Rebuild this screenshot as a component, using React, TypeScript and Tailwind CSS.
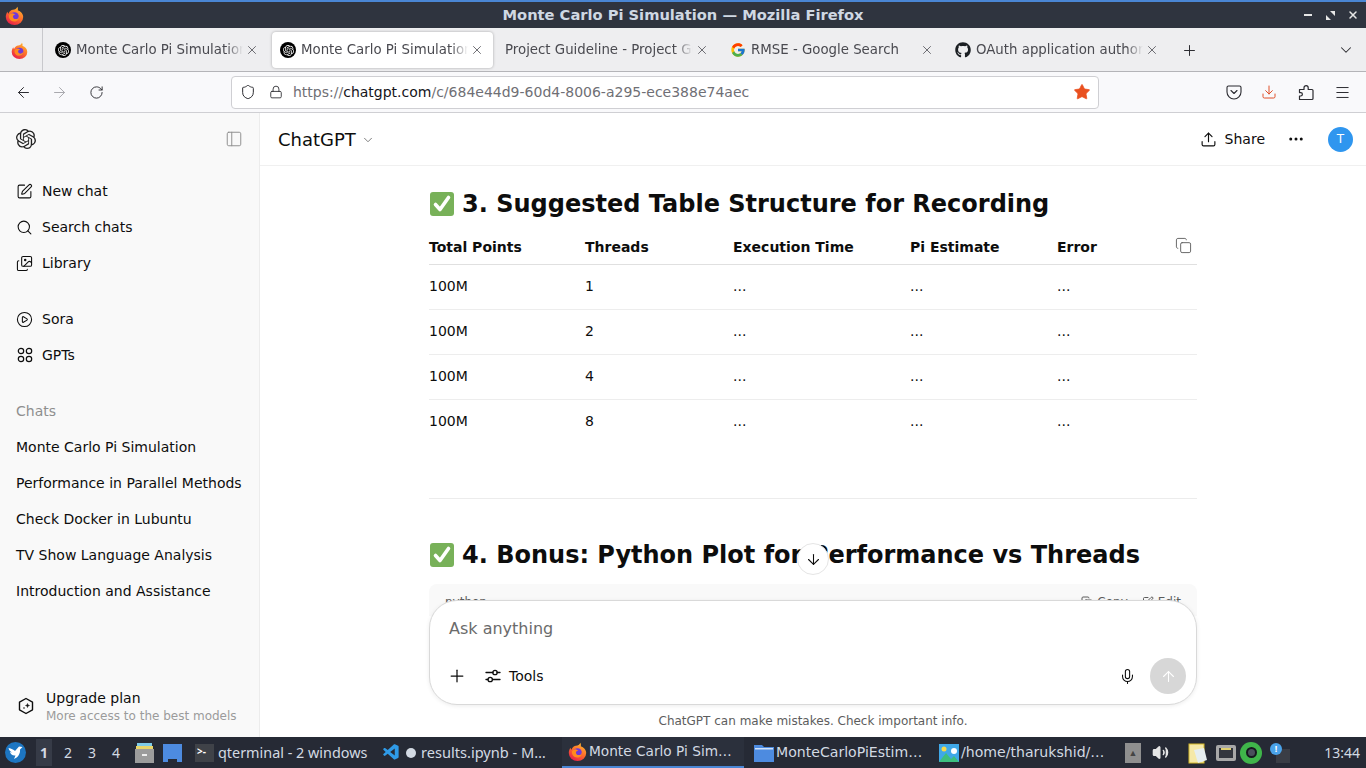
import { ArrowDown, ArrowLeft, ArrowRight, ArrowUp, ChevronDown, Copy, Ellipsis, Images, Lock, Menu, Mic, PanelLeft, Plus, RotateCw, Search, Shield, SquarePen, Star, Upload, Volume2, X, CirclePlay, Download } from 'lucide-react';
import { FaGithub } from 'react-icons/fa';
import { FcGoogle } from 'react-icons/fc';
import { SiOpenai } from 'react-icons/si';
import { VscVscode } from 'react-icons/vsc';

const FirefoxLogo = ({ size = 18 }: { size?: number }) => (
    <svg width={size} height={size} viewBox="0 0 24 24" className="shrink-0">
        <defs>
            <linearGradient id="ffOuter" x1="0.8" y1="0" x2="0.2" y2="1">
                <stop offset="0" stopColor="#ffbd2e" />
                <stop offset="0.5" stopColor="#ff6a2b" />
                <stop offset="1" stopColor="#e5194e" />
            </linearGradient>
        </defs>
        <path d="M15.5 1c1 2 1 3 .6 4.4C19.8 6.6 23 9.8 23 14a11 10 0 0 1-22 0c0-2.4.8-5 2.3-6.6 0 1.2.4 2 1 2.5C5.600 6.500 8 5 10 4.800c2.500-.3 4.800-1.400 5.500-3.800z" fill="url(#ffOuter)" />
        <circle cx="12" cy="13.500" r="5.500" fill="#7139d8" />
        <path d="M5 12c1-2 3-3 5-3l3 2c-2 0-3 1-3 2.500s1.500 3 3.500 3c2.500 0 4-2 4-4 1 3-1.500 7-6 7-4 0-7-3.500-6.500-7.500z" fill="#ff8a1f" />
    </svg>
);

const GreenCheck = () => (
    <svg width="26" height="26" viewBox="0 0 26 26" className="shrink-0">
        <rect x="1" y="1" width="24" height="24" rx="3" fill="#78b159" />
        <path d="M6.500 13.500l4.500 5 8.500-12" fill="none" stroke="#fff" strokeWidth="3.600" strokeLinecap="round" strokeLinejoin="round" />
    </svg>
);

const GptsIcon = () => (
    <svg width="18" height="18" viewBox="0 0 18 18" fill="none" stroke="currentColor" strokeWidth="1.200">
        <circle cx="5" cy="5" r="2.700" />
        <circle cx="13" cy="5" r="2.700" />
        <circle cx="5" cy="13" r="2.700" />
        <circle cx="13" cy="13" r="2.700" />
    </svg>
);

const ToolsIcon = () => (
    <svg width="16" height="16" viewBox="0 0 16 16" fill="none" stroke="currentColor" strokeWidth="1.300" strokeLinecap="round">
        <path d="M1 4.500h7M12 4.500h3M1 11.500h2M7.500 11.500H15" />
        <circle cx="10" cy="4.500" r="2.200" />
        <circle cx="5.200" cy="11.500" r="2.200" />
    </svg>
);

const UpgradeIcon = () => (
    <svg width="18" height="18" viewBox="0 0 18 18" fill="none" stroke="currentColor" strokeWidth="1.400" strokeLinejoin="round">
        <path d="M9 1.500l6.500 3.700v7.600L9 16.500l-6.500-3.700V5.200z" />
        <path d="M10.500 6.500l.5 1.500 1.500.5-1.500.5-.5 1.500-.5-1.500-1.500-.5 1.500-.5z" fill="currentColor" strokeWidth="0.500" />
        <circle cx="7" cy="11" r="0.800" fill="currentColor" stroke="none" />
    </svg>
);

const PocketIcon = () => (
    <svg width="16" height="16" viewBox="0 0 16 16" fill="none" stroke="#2b2b30" strokeWidth="1.100" strokeLinecap="round" strokeLinejoin="round">
        <path d="M2.500 2h11A1.500 1.500 0 0 1 15 3.500V8A7 7 0 0 1 1 8V3.500A1.500 1.500 0 0 1 2.500 2z" />
        <path d="M5 6.500l3 3 3-3" />
    </svg>
);

const ExtensionIcon = () => (
    <svg width="16" height="17" viewBox="0 0 16 17" fill="none" stroke="#2b2b30" strokeWidth="1.200" strokeLinejoin="round">
        <path d="M1.500 15.500V12h1.200a1.700 1.700 0 0 0 0-3.400H1.500V5.500H6V3.700a2.100 2.100 0 0 1 4.200 0v1.800h3.800a1 1 0 0 1 1 1v8a1 1 0 0 1-1 1z" />
    </svg>
);

const PanelBird = () => (
    <svg width="21" height="21" viewBox="0 0 21 21" className="shrink-0">
        <circle cx="10.500" cy="10.500" r="10.500" fill="#1d76c2" />
        <path d="M3.500 6c3 .5 5 1.500 6.500 3l4-4.500 3.500.5-2.500 2.500c.5 4-2 8-6 9.500l1.500-3.500c-3 .5-5-1.500-5.500-3.500l2.500.5C5 9.500 4 8 3.500 6z" fill="#fff" />
    </svg>
);

const OpenAiFavicon = () => (
    <span className="w-4 h-4 rounded-full bg-black flex items-center justify-center shrink-0">
        <SiOpenai size={11} color="#fff" />
    </span>
);

const tabs = [
    { title: 'Monte Carlo Pi Simulation', icon: <OpenAiFavicon /> },
    { title: 'Monte Carlo Pi Simulation', icon: <OpenAiFavicon />, active: true },
    { title: 'Project Guideline - Project Guideline', icon: null },
    { title: 'RMSE - Google Search', icon: <FcGoogle size={16} className="shrink-0" /> },
    { title: 'OAuth application authorized', icon: <FaGithub size={16} className="shrink-0" color="#1b1f23" /> },
];

const tableRows = ['1', '2', '4', '8'];

const Tab = ({ title, icon, active }: { title: string; icon: React.ReactNode; active?: boolean }) => (
    <div className={`w-[221px] h-[36px] mx-[2px] rounded-[4px] flex items-center pl-2 pr-[9px] shrink-0 ${active ? 'bg-white shadow-[0_0_3px_rgba(0,0,0,0.3)]' : ''}`}>
        {icon && <span className="mr-[5px] shrink-0">{icon}</span>}
        <span className="flex-1 overflow-hidden whitespace-nowrap text-[13.33px] text-[#4a4a50] [mask-image:linear-gradient(to_right,black_90%,transparent)]">{title}</span>
        <X size={14} strokeWidth={1.300} className="ml-[2px] shrink-0 text-[#44444a]" />
    </div>
);

const SideItem = ({ icon, label }: { icon: React.ReactNode; label: string }) => (
    <div className="h-9 flex items-center pl-4 text-[14px] text-[#0d0d0d]">
        <span className="w-[26px] shrink-0 flex items-center">{icon}</span>
        {label}
    </div>
);

const TaskItem = ({ icon, label, className }: { icon: React.ReactNode; label: string; className: string }) => (
    <div className={`h-full flex items-center whitespace-nowrap text-[#d3dae3] shrink-0 ${className}`}>
        {icon}
        <span>{label}</span>
    </div>
);

export default function App() {
    return (
        <div className="w-[1366px] h-[768px] flex flex-col overflow-hidden bg-white font-['DejaVu_Sans',sans-serif]">
            {/* Window title bar */}
            <div className="h-[28px] shrink-0 bg-[#2f343f] border-t-2 border-[#4a86d4] flex items-center relative">
                <div className="pl-[5px]"><FirefoxLogo size={19} /></div>
                <div className="absolute left-0 right-0 text-center font-bold text-[14.67px] text-[#cfd8e3]">Monte Carlo Pi Simulation — Mozilla Firefox</div>
                <div className="ml-auto flex items-center text-white">
                    <span className="w-[8px] h-[2px] bg-[#e6e6e6] mr-[14px]" />
                    <svg width="9" height="9" viewBox="0 0 9 9" className="mr-[12px]" fill="#e6e6e6"><path d="M4 0h5v5zM0 4l5 5H0z" /></svg>
                    <X size={12} strokeWidth={3} className="mr-[7px] text-[#e6e6e6]" />
                </div>
            </div>

            {/* Tab strip */}
            <div className="h-[44px] shrink-0 bg-[#eeeef0] border-b border-[#b4b4b8] flex items-center">
                <div className="w-[43px] h-full border-r border-[#c8c8cc] flex items-center justify-center pr-1 pt-[1px] shrink-0">
                    <FirefoxLogo size={17} />
                </div>
                <div className="ml-[2px] pt-[1px] flex items-center">
                    {tabs.map((t, i) => <Tab key={i} title={t.title} icon={t.icon} active={t.active} />)}
                </div>
                <Plus size={17} strokeWidth={1.400} className="ml-[11px] mt-[1px] text-[#2b2b30]" />
                <ChevronDown size={18} strokeWidth={1.400} className="ml-auto mr-[11px] text-[#2b2b30]" />
            </div>

            {/* Nav toolbar */}
            <div className="h-[41px] shrink-0 bg-[#f9f9fb] border-b border-[#cfcfd3] flex items-center">
                <ArrowLeft size={17} strokeWidth={1.400} className="ml-[15px] text-[#2b2b30]" />
                <ArrowRight size={17} strokeWidth={1.400} className="ml-[19px] text-[#a8a8ad]" />
                <RotateCw size={15} strokeWidth={1.500} className="ml-[21px] text-[#2b2b30]" />
                <div className="ml-[127px] w-[868px] h-[33px] bg-white border border-[#cfcfd3] rounded-[4px] flex items-center text-[14px] shrink-0">
                    <Shield size={16} strokeWidth={1.500} className="ml-[8px] text-[#2b2b30]" />
                    <Lock size={14} strokeWidth={1.500} className="ml-[13px] text-[#2b2b30]" />
                    <span className="ml-[10px] text-[#6f6f75] whitespace-nowrap">https://<span className="text-[#15141a]">chatgpt.com</span>/c/684e44d9-60d4-8006-a295-ece388e74aec</span>
                    <Star size={18} fill="#e9501f" strokeWidth={1} className="ml-auto mr-[7px] text-[#e9501f]" />
                </div>
                <span className="ml-[127px]"><PocketIcon /></span>
                <Download size={16} strokeWidth={1.500} className="ml-[19px] text-[#e0502a]" />
                <span className="ml-[21px]"><ExtensionIcon /></span>
                <Menu size={17} strokeWidth={1.400} className="ml-[20px] text-[#2b2b30]" />
            </div>

            {/* Page */}
            <div className="flex-1 flex min-h-0">
                <aside className="w-[260px] shrink-0 bg-[#f9f9f9] border-r border-[#ececec] flex flex-col">
                    <div className="h-[52px] flex items-center justify-between pl-4 pr-[16px] shrink-0">
                        <SiOpenai size={20} color="#222" />
                        <PanelLeft size={18} strokeWidth={1.300} className="text-[#8f8f8f]" />
                    </div>
                    <div className="mt-2">
                        <SideItem icon={<SquarePen size={17} strokeWidth={1.500} />} label="New chat" />
                        <SideItem icon={<Search size={17} strokeWidth={1.500} />} label="Search chats" />
                        <SideItem icon={<Images size={17} strokeWidth={1.500} />} label="Library" />
                    </div>
                    <div className="mt-5">
                        <SideItem icon={<CirclePlay size={17} strokeWidth={1.500} />} label="Sora" />
                        <SideItem icon={<GptsIcon />} label="GPTs" />
                    </div>
                    <div className="mt-5 h-9 flex items-center pl-4 text-[14px] text-[#8f8f8f]">Chats</div>
                    {['Monte Carlo Pi Simulation', 'Performance in Parallel Methods', 'Check Docker in Lubuntu', 'TV Show Language Analysis', 'Introduction and Assistance'].map((c) => (
                        <div key={c} className="h-9 flex items-center pl-4 text-[14px] text-[#0d0d0d] whitespace-nowrap">{c}</div>
                    ))}
                    <div className="mt-auto mb-[13px] flex items-center pl-[17px] text-[#0d0d0d]">
                        <UpgradeIcon />
                        <div className="ml-[11px]">
                            <div className="text-[14px] leading-[20px]">Upgrade plan</div>
                            <div className="text-[12px] leading-[16px] text-[#9b9b9b] whitespace-nowrap">More access to the best models</div>
                        </div>
                    </div>
                </aside>

                <main className="flex-1 min-w-0 flex flex-col relative">
                    <header className="h-[53px] shrink-0 border-b border-[#f0f0f0] flex items-center pl-[18px] pr-[13px] text-[#0d0d0d]">
                        <span className="text-[18px]">ChatGPT</span>
                        <ChevronDown size={14} strokeWidth={1.500} className="ml-[5px] mt-[2px] text-[#6b6b6b]" />
                        <Upload size={17} strokeWidth={1.600} className="ml-auto" />
                        <span className="ml-[8px] text-[14px]">Share</span>
                        <Ellipsis size={18} className="ml-[22px]" />
                        <span className="ml-[23px] w-[25px] h-[25px] rounded-full bg-[#2f96ef] text-white text-[12px] flex items-center justify-center">T</span>
                    </header>

                    {/* Conversation */}
                    <div className="h-[450px] shrink-0 overflow-hidden pl-[169px] pr-[169px] pt-[19px] text-[#0d0d0d]">
                        <h3 className="h-9 pt-[2px] flex items-center gap-[7px] text-[24px] font-bold whitespace-nowrap"><GreenCheck />3. Suggested Table Structure for Recording</h3>
                        <div className="mt-2 relative">
                            <div className="h-[36px] pt-[2px] border-b border-[#e0e0e0] grid grid-cols-[156px_148px_177px_147px_1fr] items-center text-[14px] font-bold">
                                <span>Total Points</span><span>Threads</span><span>Execution Time</span><span>Pi Estimate</span><span>Error</span>
                            </div>
                            <Copy size={17} strokeWidth={1.300} className="absolute right-[5px] top-[8px] text-[#5d5d5d]" />
                            {tableRows.map((n, i) => (
                                <div key={n} className={`h-[45px] pb-[2px] grid grid-cols-[156px_148px_177px_147px_1fr] items-center text-[14px] ${i < 3 ? 'border-b border-[#ededed]' : ''}`}>
                                    <span>100M</span><span>{n}</span><span>...</span><span>...</span><span>...</span>
                                </div>
                            ))}
                        </div>
                        <div className="mt-[53px] border-t border-[#ececec]" />
                        <h3 className="mt-[37px] h-9 pt-[2px] flex items-center gap-[7px] text-[24px] font-bold whitespace-nowrap"><GreenCheck />4. Bonus: Python Plot for Performance vs Threads</h3>
                        <div className="mt-[12px] bg-[#f9f9f9] rounded-t-[8px] h-[40px] flex items-start justify-between px-4 pt-[9px] text-[12px] text-[#5d5d5d]">
                            <span>python</span>
                            <span className="flex items-center gap-[14px]"><span className="flex items-center gap-1"><Copy size={12} />Copy</span><span className="flex items-center gap-1"><SquarePen size={12} />Edit</span></span>
                        </div>
                    </div>

                    {/* Scroll to bottom */}
                    <div className="absolute left-[537px] top-[430px] w-8 h-8 rounded-full bg-white border border-[#e5e5e5] flex items-center justify-center z-20">
                        <ArrowDown size={17} strokeWidth={1.500} className="text-[#0d0d0d]" />
                    </div>

                    {/* Composer */}
                    <div className="-mt-[16px] mx-[169px] h-[105px] shrink-0 bg-white rounded-[28px] border border-[#d9d9d9] shadow-[0_1px_4px_rgba(0,0,0,0.08)] z-10 flex flex-col px-[19px]">
                        <div className="mt-[16px] text-[16px] leading-6 text-[#6b6b6b]">Ask anything</div>
                        <div className="mt-auto mb-[10px] h-9 flex items-center text-[#0d0d0d]">
                            <Plus size={20} strokeWidth={1.500} className="-ml-[2px]" />
                            <span className="ml-[18px]"><ToolsIcon /></span>
                            <span className="ml-2 text-[14px]">Tools</span>
                            <Mic size={17} strokeWidth={1.500} className="ml-auto" />
                            <span className="ml-[14px] -mr-[9px] w-9 h-9 rounded-full bg-[#d7d7d7] flex items-center justify-center">
                                <ArrowUp size={17} strokeWidth={1.500} className="text-white" />
                            </span>
                        </div>
                    </div>
                    <div className="flex-1 flex items-center justify-center text-[12px] text-[#5d5d5d]">ChatGPT can make mistakes. Check important info.</div>
                </main>
            </div>

            {/* Desktop panel */}
            <div className="h-[31px] shrink-0 bg-[#262a35] flex items-center font-['Noto_Sans',sans-serif] text-[14.4px]">
                <span className="ml-[5px]"><PanelBird /></span>
                <div className="ml-[10px] flex items-center text-[14px] text-[#d3dae3] shrink-0">
                    <span className="w-[16px] h-[27px] bg-[#363b47] flex items-center justify-center font-bold">1</span>
                    <span className="ml-[8px] w-[16px] text-center">2</span>
                    <span className="ml-[8px] w-[16px] text-center">3</span>
                    <span className="ml-[8px] w-[16px] text-center">4</span>
                </div>
                <svg width="19" height="20" viewBox="0 0 19 20" className="ml-[11px] shrink-0">
                    <rect x="2" y="0" width="15" height="3" fill="#7ecbe8" />
                    <rect x="1" y="3" width="17" height="3" fill="#e8d56a" />
                    <rect x="0" y="6" width="19" height="14" fill="#9c9c9c" />
                    <rect x="7" y="11" width="5" height="2" fill="#eee" />
                </svg>
                <svg width="19" height="18" viewBox="0 0 19 18" className="ml-[9px] shrink-0">
                    <rect width="19" height="18" fill="#4d8be0" />
                    <rect x="5" y="15" width="9" height="3" fill="#262a35" />
                </svg>
                <TaskItem
                    className="ml-[13px] w-[187px] gap-[4px]"
                    label="qterminal - 2 windows"
                    icon={<span className="w-[19px] h-[18px] bg-[#3f4248] text-white text-[10px] leading-[14px] pl-[2px] font-bold shrink-0">&gt;-</span>}
                />
                <TaskItem
                    className="w-[180px] text-[14.6px]"
                    label="results.ipynb - M…"
                    icon={<><VscVscode size={19} color="#2f9be8" className="shrink-0" /><span className="ml-[5px] mr-[5px] w-[10px] h-[10px] rounded-full bg-[#d3dae3] shrink-0" /></>}
                />
                <div className="w-[182px] h-full border-b-2 border-[#4a86d4] bg-[#2b303c] flex items-center pl-[6px] gap-[2px] text-[13.7px] text-[#d3dae3] whitespace-nowrap font-['DejaVu_Sans',sans-serif] shrink-0">
                    <FirefoxLogo size={19} />
                    <span>Monte Carlo Pi Sim…</span>
                </div>
                <TaskItem
                    className="ml-[10px] w-[185px] gap-[2px] text-[14.1px] font-['DejaVu_Sans',sans-serif]"
                    label="MonteCarloPiEstim…"
                    icon={<svg width="20" height="18" viewBox="0 0 20 18" className="shrink-0"><path d="M0 1h8l2 2h10v15H0z" fill="#4d8be0" /><rect x="1" y="4" width="18" height="1.500" fill="#cfe2fa" /></svg>}
                />
                <TaskItem
                    className="w-[181px] gap-[2px] text-[14.1px] font-['DejaVu_Sans',sans-serif]"
                    label="/home/tharukshid/…"
                    icon={<svg width="20" height="18" viewBox="0 0 20 18" className="shrink-0"><rect width="20" height="18" fill="#3fa8e8" /><circle cx="5" cy="5" r="2.500" fill="#f5d84a" /><path d="M0 18l7-9 5 6 3-3 5 6z" fill="#3dbf7e" /><circle cx="15" cy="7" r="3" fill="#fff" /></svg>}
                />
                <span className="w-4 h-5 bg-[#8f8f8f] flex items-center justify-center text-[9px] text-[#444] shrink-0 ml-[5px]">▲</span>
                <Volume2 size={17} className="ml-[11px] text-[#e6e6e6] shrink-0" fill="#e6e6e6" />
                <svg width="19" height="22" viewBox="0 0 19 22" className="ml-[19px] shrink-0">
                    <rect x="1" y="2" width="15" height="19" fill="#f5e9a8" stroke="#d6b92a" />
                    <path d="M6 8l10-2 3 12-9 3z" fill="#e6eef0" />
                </svg>
                <svg width="20" height="16" viewBox="0 0 20 16" className="ml-[9px] shrink-0">
                    <rect width="20" height="16" rx="2" fill="#a8a8a8" />
                    <rect x="3" y="3" width="14" height="10" fill="#33363e" />
                    <rect x="5" y="3" width="10" height="2" fill="#e0cf70" />
                </svg>
                <span className="ml-[4px] w-[22px] h-[22px] rounded-full bg-[#3fb54a] flex items-center justify-center shrink-0">
                    <span className="w-[11px] h-[11px] rounded-full bg-[#4a4f5c] border-2 border-[#15181e]" />
                </span>
                <span className="ml-[8px] relative w-[20px] h-[20px] shrink-0">
                    <span className="absolute right-0 bottom-0 w-[14px] h-[14px] bg-[#3a3d45]" />
                    <span className="absolute left-0 top-0 w-3 h-3 rounded-full bg-[#4aa3ea] text-white text-[9px] font-bold flex items-center justify-center">!</span>
                </span>
                <span className="ml-auto mr-[6px] text-[14px] text-[#d3dae3]">13:44</span>
            </div>
        </div>
    );
}
